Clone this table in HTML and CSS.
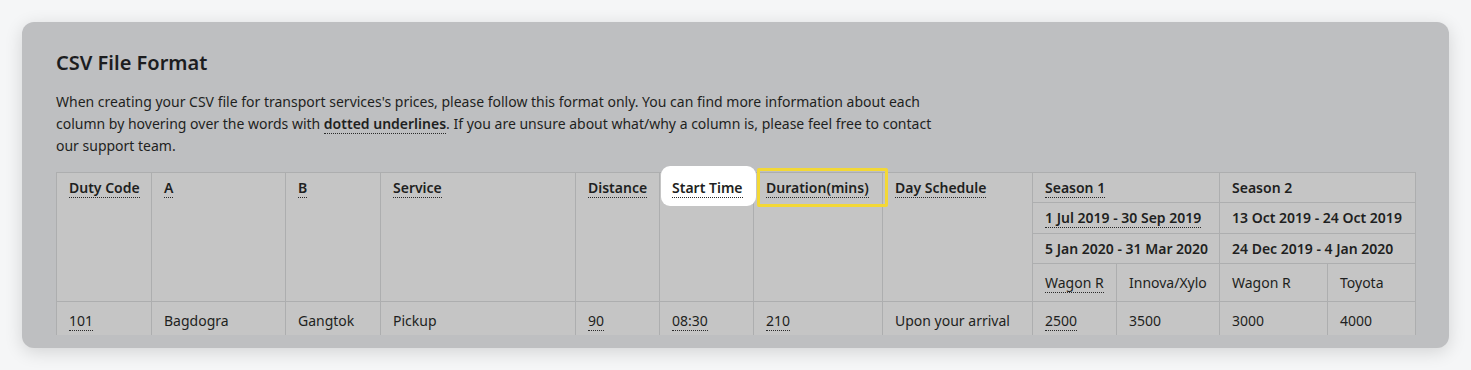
FILE: index.html
```html
<!DOCTYPE html>
<html lang="en">
<head>
<meta charset="utf-8">
<title>CSV File Format</title>
<link rel="stylesheet" href="styles.css">
</head>
<body>
<div class="page">
  <section class="card">
    <h2 class="title">CSV File Format</h2>
    <p class="intro">When creating your CSV file for transport services's prices, please follow this format only. You can find more information about each column by hovering over the words with <b class="tip">dotted underlines</b>. If you are unsure about what/why a column is, please feel free to contact our support team.</p>
    <div class="table-wrap">
      <table class="csv">
        <colgroup>
          <col style="width:95px"><col style="width:134px"><col style="width:95px"><col style="width:195px">
          <col style="width:84px"><col style="width:94px"><col style="width:129px"><col style="width:150px">
          <col style="width:84px"><col style="width:103px"><col style="width:108px"><col style="width:88px">
        </colgroup>
        <thead>
          <tr class="hrow">
            <th rowspan="4"><span class="tip">Duty Code</span></th>
            <th rowspan="4"><span class="tip">A</span></th>
            <th rowspan="4"><span class="tip">B</span></th>
            <th rowspan="4"><span class="tip">Service</span></th>
            <th rowspan="4"><span class="tip">Distance</span></th>
            <th rowspan="4" class="hl-white"><span class="tip">Start Time</span></th>
            <th rowspan="4" class="hl-yellow"><span class="tip">Duration(mins)</span></th>
            <th rowspan="4"><span class="tip">Day Schedule</span></th>
            <th colspan="2"><span class="tip">Season 1</span></th>
            <th colspan="2">Season 2</th>
          </tr>
          <tr class="hrow hrow-dates">
            <th colspan="2"><span class="tip">1 Jul 2019 - 30 Sep 2019</span></th>
            <th colspan="2">13 Oct 2019 - 24 Oct 2019</th>
          </tr>
          <tr class="hrow">
            <th colspan="2">5 Jan 2020 - 31 Mar 2020</th>
            <th colspan="2">24 Dec 2019 - 4 Jan 2020</th>
          </tr>
          <tr class="vrow">
            <td><span class="tip">Wagon R</span></td>
            <td>Innova/Xylo</td>
            <td>Wagon R</td>
            <td>Toyota</td>
          </tr>
        </thead>
        <tbody>
          <tr>
            <td><span class="tip">101</span></td>
            <td>Bagdogra</td>
            <td>Gangtok</td>
            <td>Pickup</td>
            <td><span class="tip">90</span></td>
            <td><span class="tip">08:30</span></td>
            <td><span class="tip">210</span></td>
            <td>Upon your arrival</td>
            <td><span class="tip">2500</span></td>
            <td>3500</td>
            <td>3000</td>
            <td>4000</td>
          </tr>
        </tbody>
      </table>
    </div>
  </section>
</div>
</body>
</html>
```

FILE: styles.css
```css
*, *::before, *::after { box-sizing: border-box; }

html, body {
  margin: 0;
  padding: 0;
}

body {
  background: #f5f6f7;
  font-family: "Noto Sans", "Open Sans", "Liberation Sans", sans-serif;
  color: #1e1f21;
  width: 1471px;
  height: 370px;
  overflow: hidden;
}

.page {
  padding: 22px;
}

.card {
  width: 1427px;
  height: 326px;
  background: #bebfc1;
  border-radius: 12px;
  box-shadow: 0 4px 18px rgba(0, 0, 0, 0.14);
  padding: 27px 34px 13px;
  display: flex;
  flex-direction: column;
}

.title {
  margin: 0;
  font-size: 20px;
  line-height: 28px;
  font-weight: 600;
  color: #1c1d1f;
}

.intro {
  margin: 14px 0 0;
  width: 890px;
  font-size: 14px;
  line-height: 22px;
  color: #1e1f21;
}

.intro b { font-weight: 600; }

.tip {
  border-bottom: 1px dotted #2a2a2a;
}

.table-wrap {
  flex: 1;
  margin: 7px -1px 0;
  padding: 8px 1px 0;
  overflow: hidden;
}

.csv {
  width: 1359px;
  table-layout: fixed;
  border-collapse: collapse;
  background: #c5c5c5;
  font-size: 14px;
  line-height: 22px;
}

.csv th,
.csv td {
  border: 1px solid #adaeaf;
  text-align: left;
  vertical-align: top;
  white-space: nowrap;
  color: #1e1f21;
}

.csv th {
  font-weight: 600;
  padding: 4px 12px 3px;
}

.csv .hrow-dates th {
  padding-bottom: 4px;
}

.csv .vrow td {
  padding: 8px 12px 7px;
  font-weight: 400;
}

.csv tbody td {
  padding: 8px 12px;
}

.hl-white,
.hl-yellow {
  position: relative;
  z-index: 0;
}

.hl-white::before {
  content: "";
  position: absolute;
  z-index: -1;
  left: 1px;
  top: -7px;
  width: 95px;
  height: 40px;
  background: #ffffff;
  border-radius: 9px;
}

.hl-yellow::after {
  content: "";
  position: absolute;
  left: 3px;
  top: -5px;
  width: 131px;
  height: 39px;
  border: 3px solid #f3d836;
  border-radius: 2px;
}
```
